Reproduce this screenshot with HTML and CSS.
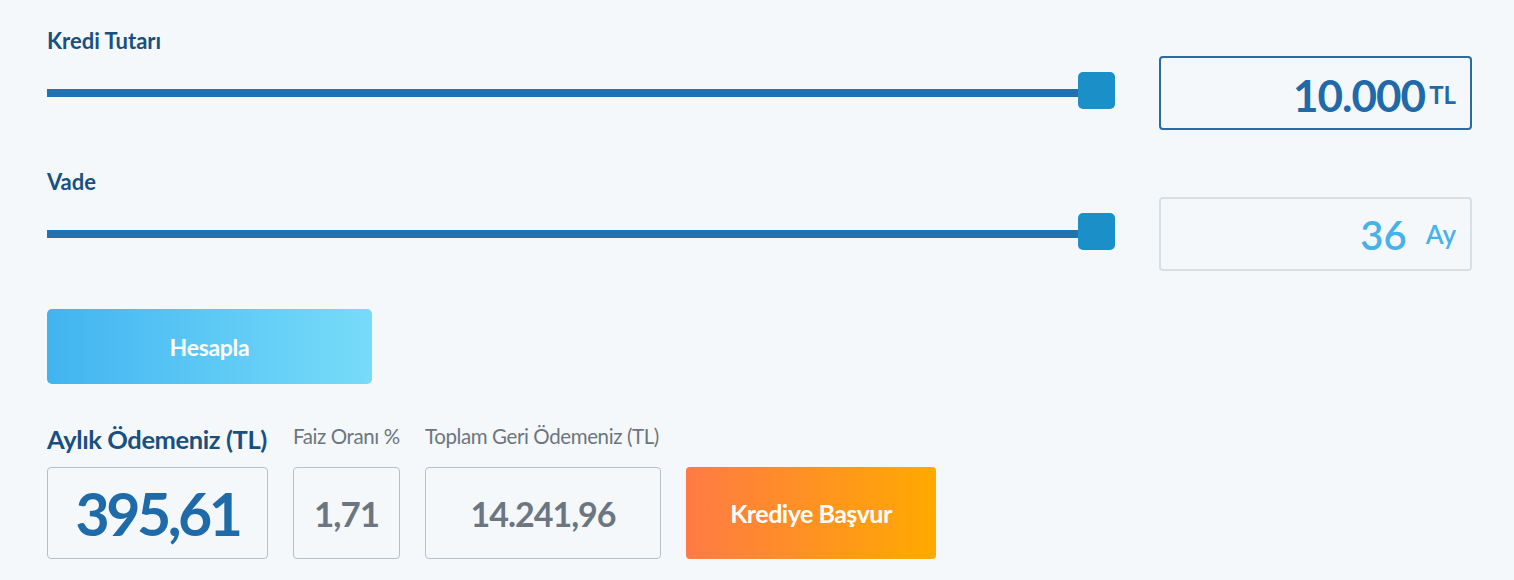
FILE: index.html
```html
<!DOCTYPE html>
<html lang="tr">
<head>
<meta charset="utf-8">
<title>Kredi Hesaplama</title>
<link rel="stylesheet" href="styles.css">
</head>
<body>
<div class="calc">
  <div class="field">
    <div class="field-label">Kredi Tutarı</div>
    <div class="field-row">
      <div class="slider">
        <div class="track"></div>
        <div class="thumb"></div>
      </div>
      <div class="value-box value-box--active">
        <span class="num num--amount">10.000</span><span class="unit unit--tl">TL</span>
      </div>
    </div>
  </div>

  <div class="field field--second">
    <div class="field-label">Vade</div>
    <div class="field-row">
      <div class="slider">
        <div class="track"></div>
        <div class="thumb"></div>
      </div>
      <div class="value-box">
        <span class="num num--term">36</span><span class="unit unit--ay">Ay</span>
      </div>
    </div>
  </div>

  <button class="btn-calc" type="button">Hesapla</button>

  <div class="results">
    <div class="res-label res-label--main">Aylık Ödemeniz (TL)</div>
    <div class="res-label">Faiz Oranı %</div>
    <div class="res-label">Toplam Geri Ödemeniz (TL)</div>
    <div></div>
    <div class="res-box"><span class="res-val res-val--main">395,61</span></div>
    <div class="res-box"><span class="res-val res-val--small">1,71</span></div>
    <div class="res-box"><span class="res-val">14.241,96</span></div>
    <button class="btn-apply" type="button">Krediye Başvur</button>
  </div>
</div>
</body>
</html>
```

FILE: styles.css
```css
* { box-sizing: border-box; }

html, body {
  margin: 0;
  padding: 0;
  background: #f5f8fb;
}

body {
  font-family: Lato, "Open Sans", "Liberation Sans", sans-serif;
  width: 1514px;
  height: 580px;
  overflow: hidden;
}

.calc {
  padding: 29px 42px 0 47px;
}

.field-label {
  font-size: 22px;
  font-weight: 700;
  color: #18507f;
  line-height: 24px;
  margin-bottom: 3px;
}

.field--second {
  margin-top: 40px;
}

.field-row {
  display: flex;
  align-items: center;
  height: 74px;
}

.slider {
  flex: 1;
  display: flex;
  align-items: center;
  margin-right: 44px;
}

.track {
  flex: 1;
  height: 8px;
  background: #2271b1;
}

.thumb {
  width: 37px;
  height: 37px;
  border-radius: 5px;
  background: #1b8fc8;
  margin-bottom: 5px;
}

.value-box {
  width: 313px;
  height: 74px;
  border: 2px solid #d6dee6;
  border-radius: 4px;
  display: flex;
  align-items: center;
  justify-content: flex-end;
  padding-right: 14px;
}

.value-box--active {
  border-color: #2a6aa5;
  padding-right: 14px;
}

.num {
  font-weight: 700;
}

.num--amount {
  font-size: 44px;
  color: #1f6aa8;
  letter-spacing: -1px;
  margin-top: 4px;
}

.unit--tl {
  font-size: 24px;
  font-weight: 700;
  color: #1f6aa8;
  margin-left: 4px;
  margin-top: 2px;
}

.num--term {
  font-size: 40px;
  font-weight: 600;
  color: #47b2ea;
  margin-top: 2px;
}

.unit--ay {
  font-size: 26px;
  font-weight: 600;
  color: #47b2ea;
  margin-left: 19px;
}

.btn-calc {
  display: block;
  margin-top: 38px;
  width: 325px;
  height: 75px;
  border: 0;
  border-radius: 5px;
  background: linear-gradient(90deg, #41b4f0 0%, #77dcfa 100%);
  color: #fff;
  font-family: inherit;
  font-size: 23px;
  font-weight: 700;
  letter-spacing: -0.3px;
}

.results {
  margin-top: 38px;
  display: grid;
  grid-template-columns: 221px 107px 236px 250px;
  grid-template-rows: 45px 92px;
  column-gap: 25px;
  align-items: end;
}

.res-label {
  font-size: 20.5px;
  color: #6b7680;
  line-height: 24px;
  white-space: nowrap;
  padding-bottom: 19px;
  letter-spacing: -0.4px;
}

.res-label--main {
  font-size: 25.5px;
  font-weight: 700;
  color: #18507f;
  padding-bottom: 16px;
  letter-spacing: -0.4px;
}

.res-box {
  height: 92px;
  border: 1px solid #b7bfc7;
  border-radius: 4px;
  display: flex;
  align-items: center;
  justify-content: center;
}

.res-val {
  font-size: 34px;
  font-weight: 700;
  color: #6b7680;
  letter-spacing: -1px;
}

.res-val--small {
  font-size: 35px;
}

.res-val--main {
  font-size: 59px;
  color: #1f6aa8;
  letter-spacing: -3.5px;
}

.btn-apply {
  height: 92px;
  border: 0;
  border-radius: 4px;
  background: linear-gradient(90deg, #ff7a45 0%, #ffaa00 100%);
  color: #fff;
  font-family: inherit;
  font-size: 25px;
  font-weight: 700;
  letter-spacing: -0.5px;
}
```
